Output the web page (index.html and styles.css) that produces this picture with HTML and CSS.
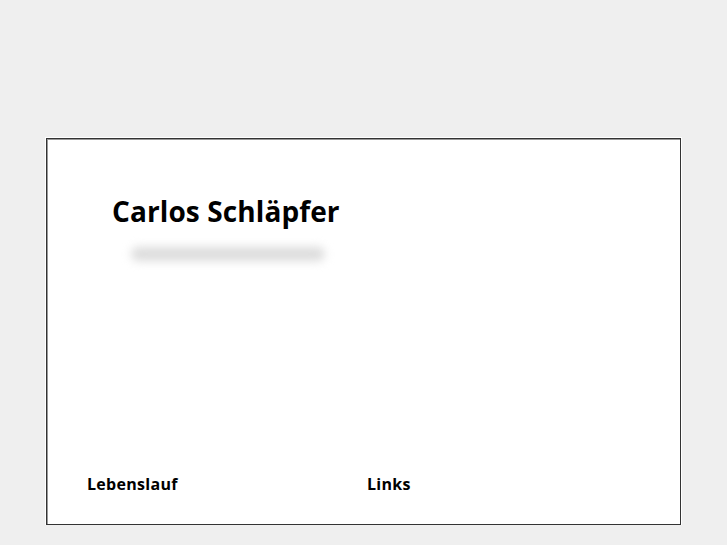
FILE: index.html
```html
<!DOCTYPE html>
<html lang="de">
<head>
    <meta charset="UTF-8">
    <title>Carlos Schläpfer</title>
    <link rel="stylesheet" href="styles.css">
</head>
<body>

<div class="page">
    <div class="card">
        <header class="intro">
            <h1>Carlos Schläpfer</h1>
            <div class="subtitle"></div>
        </header>
        <nav class="menu">
            <a href="#" class="menu-item">Lebenslauf</a>
            <a href="#" class="menu-item">Links</a>
        </nav>
    </div>
</div>

</body>
</html>
```

FILE: styles.css
```css
body {
    font-family: "Open Sans", "Noto Sans", sans-serif;
    background-color: #efefef;
    margin: 0;
    padding: 0;
}
.page {
    padding: 138px 0 0 46px;
}
.card {
    box-sizing: border-box;
    width: 635px;
    height: 387px;
    background-color: #fff;
    border: 1px solid #333;
    box-shadow: inset 1px 1px 0 #999, 0 0 0 1px #fff;
    display: flex;
    flex-direction: column;
    justify-content: space-between;
}
.intro {
    padding: 53px 0 0 65px;
}
h1 {
    margin: 0;
    font-size: 28px;
    font-weight: 700;
    color: #000;
    letter-spacing: 0.1px;
}
.subtitle {
    width: 194px;
    height: 14px;
    margin: 17px 0 0 19px;
    background-color: #dcdcdc;
    border-radius: 7px;
    filter: blur(5px);
}
.menu {
    display: flex;
    padding: 0 0 29px 40px;
}
.menu-item {
    width: 280px;
    font-size: 16px;
    font-weight: 700;
    color: #000;
    text-decoration: none;
    letter-spacing: 0.3px;
}
```
